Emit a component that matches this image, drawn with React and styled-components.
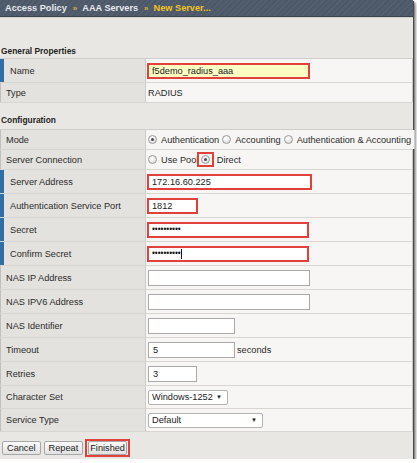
import React from 'react';
import styled, { createGlobalStyle } from 'styled-components';

const GlobalStyle = createGlobalStyle`
  html, body { margin: 0; padding: 0; background: #ffffff; }
  body { font-family: "Liberation Sans", Arial, sans-serif; }
  * { box-sizing: border-box; }
`;

const Frame = styled.div`
  width: 413px;
  height: 459px;
  background: #e9e7e3;
  display: flex;
  flex-direction: column;
  box-shadow: 1px 1px 0 #4a4a4a, 2px 2px 2px rgba(0, 0, 0, 0.5), 4px 4px 3px rgba(0, 0, 0, 0.18);
`;

const Breadcrumb = styled.div`
  flex: none;
  height: 17px;
  padding-left: 5px;
  display: flex;
  align-items: center;
  white-space: nowrap;
  background: repeating-linear-gradient(135deg, #535e6f 0 2px, #4c5768 2px 4px);
  border-bottom: 1px solid #3a424e;
  box-shadow: 0 1px 0 #d2d0cb;
  font-size: 9.2px;
  font-weight: bold;
  color: #e6e9ee;
`;

const Crumb = styled.span`
  color: ${(p) => (p.$current ? '#f3c41c' : '#e6e9ee')};
`;

const CrumbSep = styled.span`
  color: #d9b03a;
  font-size: 8px;
  margin: 0 5px 0 6px;
`;

const SectionTitle = styled.div`
  flex: none;
  height: 14px;
  line-height: 14px;
  margin-top: ${(p) => p.$top}px;
  margin-bottom: ${(p) => p.$bottom || 0}px;
  padding-left: 1px;
  font-size: 8.4px;
  font-weight: bold;
  color: #1f1f1f;
`;

const Table = styled.div`
  flex: none;
  display: flex;
  flex-direction: column;
  border-top: 1px solid #d0ceca;
`;

const Row = styled.div`
  display: flex;
  height: ${(p) => p.$h}px;
  border-bottom: 1px solid #d8d6d2;
`;

const Label = styled.div`
  flex: none;
  width: 146px;
  display: flex;
  align-items: center;
  background: #e4e2de;
  border-left: ${(p) => (p.$required ? '4px solid #336da6' : '1px solid #c2c0bc')};
  border-right: 1px solid #cdcbc7;
  padding-left: ${(p) => (p.$required ? 6 : 5)}px;
  font-size: 9.2px;
  color: #2b2b2b;
  white-space: nowrap;
`;

const Value = styled.div`
  flex: 1;
  display: flex;
  align-items: center;
  padding-left: 2px;
  background: #f7f6f4;
  border-right: 1px solid #c9c7c3;
  font-size: 9.2px;
  color: #1e1e1e;
  white-space: nowrap;
`;

const TextBox = styled.div`
  flex: none;
  position: relative;
  width: ${(p) => p.$w}px;
  height: 16px;
  margin-left: ${(p) => (p.$mark ? -1 : 0)}px;
  display: flex;
  align-items: center;
  padding-left: ${(p) => (p.$mark ? 3 : 4)}px;
  background: ${(p) => p.$bg || '#ffffff'};
  border: ${(p) => (p.$mark ? '2px solid #e2403b' : '1px solid #a9a9a9')};
  font-size: 9.2px;
  color: #1a1a1a;
`;

const Dots = styled.span`
  font-size: 8.2px;
  letter-spacing: 0;
  color: #111;
`;

const Caret = styled.span`
  display: inline-block;
  width: 1px;
  height: 10px;
  background: #111;
`;

const Suffix = styled.span`
  margin-left: 2px;
  color: #2b2b2b;
`;

const Select = styled.div`
  flex: none;
  width: ${(p) => p.$w}px;
  height: 15px;
  display: flex;
  align-items: center;
  justify-content: space-between;
  padding: 0 5px 0 3px;
  background: #ffffff;
  border: 1px solid #b3b3b3;
  border-radius: 2px;
  font-size: 9.2px;
  color: #1a1a1a;
`;

const Arrow = styled.span`
  font-size: 6px;
  color: #222;
`;

const RadioOption = styled.span`
  display: inline-flex;
  align-items: center;
  margin-right: 3px;
  color: #2b2b2b;
`;

const Radio = styled.span`
  position: relative;
  flex: none;
  width: 9px;
  height: 9px;
  margin-right: 4px;
  border-radius: 50%;
  border: 1px solid #9a9a9a;
  background: radial-gradient(circle at 40% 35%, #ffffff 0%, #e6e6e6 60%, #cfcfcf 100%);
  &::after {
    content: '';
    display: ${(p) => (p.$checked ? 'block' : 'none')};
    position: absolute;
    left: 50%;
    top: 50%;
    width: 3px;
    height: 3px;
    margin: -1.5px 0 0 -1.5px;
    border-radius: 50%;
    background: #4a4a4a;
  }
`;

const MarkBox = styled.span`
  display: inline-flex;
  align-items: center;
  justify-content: center;
  width: 17px;
  height: 15px;
  margin-left: -4px;
  border: 2px solid #e2403b;
  & > span { margin-right: 0; }
`;

const ButtonBar = styled.div`
  flex: none;
  display: flex;
  align-items: center;
  gap: 3px;
  margin-top: 7px;
  padding-left: 2px;
  height: 18px;
`;

const Button = styled.button`
  height: 14px;
  padding: 0 ${(p) => p.$pad ?? 4}px;
  margin: 0;
  border: 1px solid #a7a7a7;
  border-radius: 2px;
  background: linear-gradient(#fbfbfb, #e2e2e2);
  font-family: "Liberation Sans", Arial, sans-serif;
  font-size: 9.2px;
  line-height: 12px;
  color: #222;
`;

const ButtonMark = styled.span`
  display: inline-flex;
  margin-left: -1px;
  padding: 0 1px;
  border: 2px solid #e2403b;
`;

const configRows = [
  { label: 'NAS IP Address', w: 162 },
  { label: 'NAS IPV6 Address', w: 162 },
  { label: 'NAS Identifier', w: 87 },
];

export default function App() {
  return (
    <>
      <GlobalStyle />
      <Frame>
        <Breadcrumb>
          <Crumb>Access Policy</Crumb>
          <CrumbSep>»</CrumbSep>
          <Crumb>AAA Servers</Crumb>
          <CrumbSep>»</CrumbSep>
          <Crumb $current>New Server...</Crumb>
        </Breadcrumb>

        <SectionTitle $top={27}>General Properties</SectionTitle>
        <Table>
          <Row $h={24}>
            <Label $required>Name</Label>
            <Value>
              <TextBox $w={163} $mark $bg="#ffffc4">f5demo_radius_aaa</TextBox>
            </Value>
          </Row>
          <Row $h={20}>
            <Label>Type</Label>
            <Value>RADIUS</Value>
          </Row>
        </Table>

        <SectionTitle $top={10} $bottom={2}>Configuration</SectionTitle>
        <Table>
          <Row $h={20}>
            <Label>Mode</Label>
            <Value>
              <RadioOption><Radio $checked />Authentication</RadioOption>
              <RadioOption><Radio />Accounting</RadioOption>
              <RadioOption><Radio />Authentication &amp; Accounting</RadioOption>
            </Value>
          </Row>
          <Row $h={20}>
            <Label>Server Connection</Label>
            <Value>
              <RadioOption><Radio />Use Pool</RadioOption>
              <MarkBox><Radio $checked /></MarkBox>
              <RadioOption>&nbsp;Direct</RadioOption>
            </Value>
          </Row>
          <Row $h={24}>
            <Label $required>Server Address</Label>
            <Value>
              <TextBox $w={165} $mark>172.16.60.225</TextBox>
            </Value>
          </Row>
          <Row $h={24}>
            <Label $required>Authentication Service Port</Label>
            <Value>
              <TextBox $w={51} $mark>1812</TextBox>
            </Value>
          </Row>
          <Row $h={24}>
            <Label $required>Secret</Label>
            <Value>
              <TextBox $w={162} $mark><Dots>••••••••••</Dots></TextBox>
            </Value>
          </Row>
          <Row $h={24}>
            <Label $required>Confirm Secret</Label>
            <Value>
              <TextBox $w={162} $mark><Dots>••••••••••</Dots><Caret /></TextBox>
            </Value>
          </Row>
          {configRows.map((r) => (
            <Row $h={24} key={r.label}>
              <Label>{r.label}</Label>
              <Value>
                <TextBox $w={r.w} />
              </Value>
            </Row>
          ))}
          <Row $h={24}>
            <Label>Timeout</Label>
            <Value>
              <TextBox $w={87}>5</TextBox>
              <Suffix>seconds</Suffix>
            </Value>
          </Row>
          <Row $h={24}>
            <Label>Retries</Label>
            <Value>
              <TextBox $w={49}>3</TextBox>
            </Value>
          </Row>
          <Row $h={23}>
            <Label>Character Set</Label>
            <Value>
              <Select $w={80}>Windows-1252<Arrow>▼</Arrow></Select>
            </Value>
          </Row>
          <Row $h={23}>
            <Label>Service Type</Label>
            <Value>
              <Select $w={115}>Default<Arrow>▼</Arrow></Select>
            </Value>
          </Row>
        </Table>

        <ButtonBar>
          <Button type="button">Cancel</Button>
          <Button type="button">Repeat</Button>
          <ButtonMark>
            <Button type="button" $pad={1}>Finished</Button>
          </ButtonMark>
        </ButtonBar>
      </Frame>
    </>
  );
}
